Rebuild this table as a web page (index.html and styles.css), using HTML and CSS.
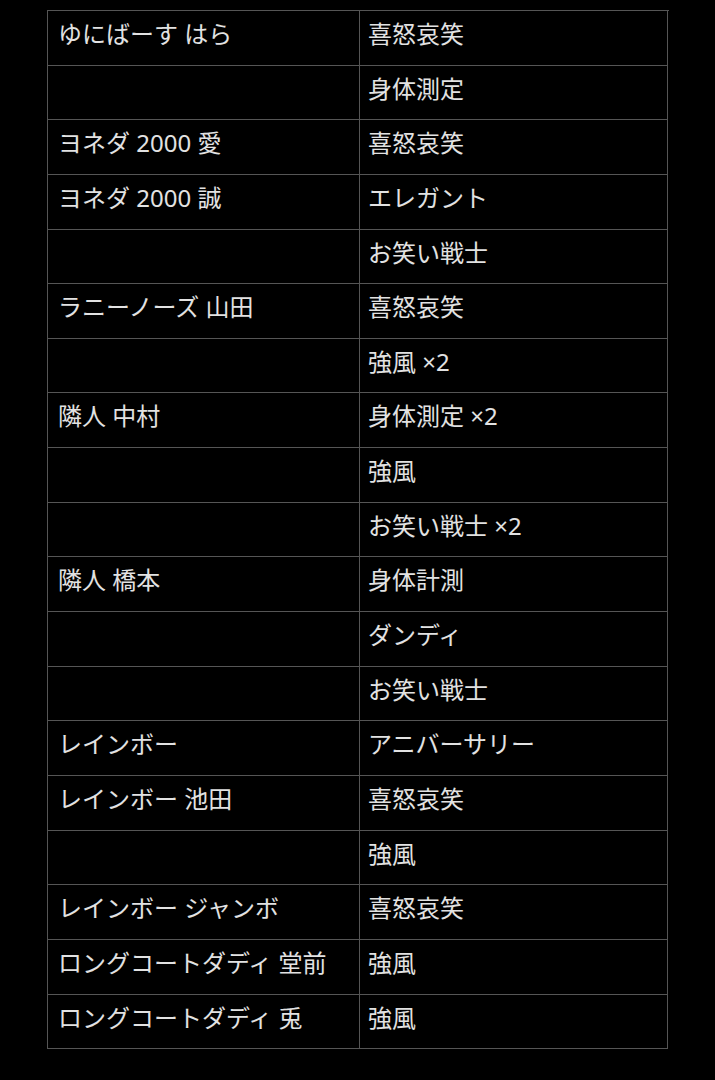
FILE: index.html
```html
<!DOCTYPE html>
<html lang="ja">
<head>
<meta charset="utf-8">
<link rel="stylesheet" href="styles.css">
</head>
<body>
<div class="table">
  <div class="cell">ゆにばーす はら</div><div class="cell">喜怒哀笑</div>
  <div class="cell"></div><div class="cell">身体測定</div>
  <div class="cell">ヨネダ 2000 愛</div><div class="cell">喜怒哀笑</div>
  <div class="cell">ヨネダ 2000 誠</div><div class="cell">エレガント</div>
  <div class="cell"></div><div class="cell">お笑い戦士</div>
  <div class="cell">ラニーノーズ 山田</div><div class="cell">喜怒哀笑</div>
  <div class="cell"></div><div class="cell">強風 ×2</div>
  <div class="cell">隣人 中村</div><div class="cell">身体測定 ×2</div>
  <div class="cell"></div><div class="cell">強風</div>
  <div class="cell"></div><div class="cell">お笑い戦士 ×2</div>
  <div class="cell">隣人 橋本</div><div class="cell">身体計測</div>
  <div class="cell"></div><div class="cell">ダンディ</div>
  <div class="cell"></div><div class="cell">お笑い戦士</div>
  <div class="cell">レインボー</div><div class="cell">アニバーサリー</div>
  <div class="cell">レインボー 池田</div><div class="cell">喜怒哀笑</div>
  <div class="cell"></div><div class="cell">強風</div>
  <div class="cell">レインボー ジャンボ</div><div class="cell">喜怒哀笑</div>
  <div class="cell">ロングコートダディ 堂前</div><div class="cell">強風</div>
  <div class="cell">ロングコートダディ 兎</div><div class="cell">強風</div>
</div>
</body>
</html>
```

FILE: styles.css
```css
html, body {
  margin: 0;
  padding: 0;
  background: #000;
}
body {
  padding: 10px 0 0 47px;
  font-family: "Noto Sans", "Noto Sans CJK JP", sans-serif;
  color: #e2e2e2;
}
.table {
  display: grid;
  grid-template-columns: 312px 308px;
  grid-auto-rows: 54.65px;
  width: 621px;
  border-top: 1px solid #555;
  border-left: 1px solid #555;
}
.cell {
  border-right: 1px solid #555;
  border-bottom: 1px solid #555;
  padding: 6px 10px 0 10px;
  font-size: 24px;
  line-height: 34px;
  white-space: nowrap;
}
.cell:nth-child(2n) {
  padding-left: 8px;
}
```
